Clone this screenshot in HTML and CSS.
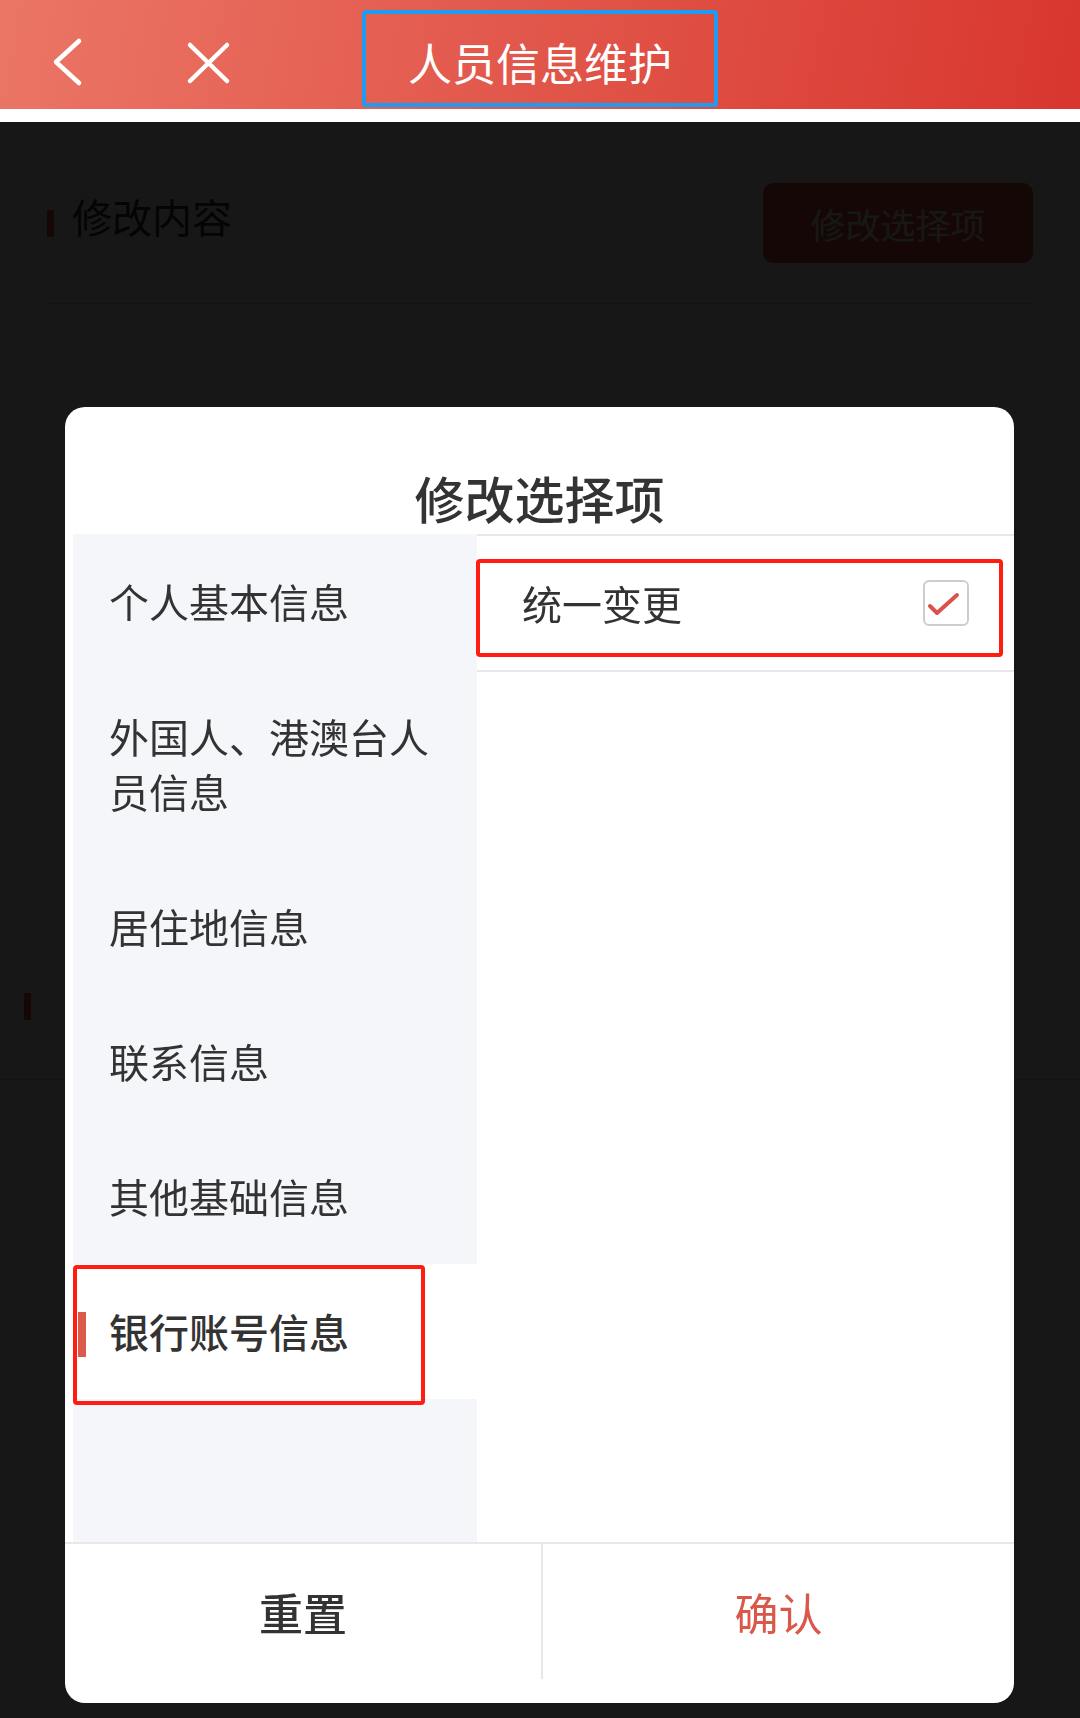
FILE: index.html
```html
<!DOCTYPE html>
<html lang="zh-CN">
<head>
    <meta charset="UTF-8">
    <meta name="viewport" content="width=device-width, initial-scale=1.0">
    <title>人员信息维护</title>
    <link rel="stylesheet" href="styles.css">
</head>
<body>
    <header class="nav">
        <div class="nav-left">
            <svg class="icon-back" width="34" height="50" viewBox="0 0 34 50">
                <path d="M29 4 L6 25 L29 46" fill="none" stroke="#fff" stroke-width="4.5" stroke-linecap="round" stroke-linejoin="round"/>
            </svg>
            <svg class="icon-close" width="50" height="50" viewBox="0 0 50 50">
                <path d="M6 8 L43 44 M43 8 L6 44" fill="none" stroke="#fff" stroke-width="4.5" stroke-linecap="round"/>
            </svg>
        </div>
        <div class="nav-title">
            <h1>人员信息维护</h1>
        </div>
        <div></div>
    </header>

    <main class="page">
        <div class="section-head">
            <span class="mark"></span>
            <h2>修改内容</h2>
            <button class="btn-edit">修改选择项</button>
        </div>
        <div class="section-head second">
            <span class="mark"></span>
            <h2>银行账号信息</h2>
        </div>
    </main>

    <div class="mask"></div>

    <div class="dialog">
        <div class="dialog-title">修改选择项</div>
        <div class="dialog-body">
            <ul class="cat-list">
                <li>个人基本信息</li>
                <li>外国人、港澳台人员信息</li>
                <li>居住地信息</li>
                <li>联系信息</li>
                <li>其他基础信息</li>
                <li class="active"><span class="bar"></span>银行账号信息<span class="mark-box"></span></li>
            </ul>
            <div class="opt-pane">
                <div class="opt-row">
                    <span>统一变更</span>
                    <span class="checkbox">
                        <svg width="42" height="42" viewBox="0 0 42 42">
                            <path d="M5 24 L12 31 L32 13" fill="none" stroke="#d9534a" stroke-width="4" stroke-linecap="round" stroke-linejoin="round"/>
                        </svg>
                    </span>
                    <span class="mark-box"></span>
                </div>
            </div>
        </div>
        <div class="dialog-foot">
            <button class="btn-reset">重置</button>
            <button class="btn-ok">确认</button>
        </div>
    </div>
</body>
</html>
```

FILE: styles.css
```css
body {
    margin: 0;
    font-family: "Noto Sans CJK SC", "Noto Sans", sans-serif;
    background-color: #fff;
    color: #333;
}

/* top bar */
.nav {
    height: 109px;
    box-sizing: border-box;
    padding-top: 14px;
    background: linear-gradient(100deg, #eb7666, #d8362e);
    display: grid;
    grid-template-columns: 1fr 356px 1fr;
    align-items: center;
}
.nav-left {
    display: flex;
    align-items: center;
    gap: 100px;
    padding-left: 50px;
}
.nav-left svg {
    display: block;
}
.nav-title {
    align-self: start;
    margin-top: -4px;
    height: 97px;
    box-sizing: border-box;
    padding-top: 6px;
    border: 4px solid #1e9bf2;
    border-radius: 4px;
    display: flex;
    align-items: center;
    justify-content: center;
}
.nav-title h1 {
    margin: 0;
    font-size: 44px;
    font-weight: 400;
    line-height: 1;
    color: #fff;
}

/* page behind the mask */
.page {
    padding-top: 74px;
}
.section-head {
    display: flex;
    align-items: center;
    margin: 0 47px;
    padding-bottom: 40px;
    border-bottom: 1px solid #ccc;
}
.section-head .mark {
    width: 7px;
    height: 27px;
    background-color: #e0533f;
    margin-right: 18px;
}
.section-head h2 {
    margin: 0 0 14px;
    font-size: 40px;
    font-weight: 400;
    color: #333;
}
.btn-edit {
    margin-left: auto;
    width: 270px;
    height: 80px;
    border: none;
    border-radius: 10px;
    background-color: #e0533f;
    color: #fff;
    font-family: inherit;
    font-size: 35px;
}
.section-head.second {
    margin: 675px 0 0;
    padding: 0 24px 46px;
    height: 54px;
}
.section-head.second .mark {
    margin-right: 50px;
}

.mask {
    position: fixed;
    top: 122px;
    left: 0;
    right: 0;
    bottom: 0;
    background-color: rgba(0, 0, 0, 0.91);
}

/* dialog */
.dialog {
    position: fixed;
    top: 407px;
    left: 65px;
    width: 949px;
    height: 1296px;
    background-color: #fff;
    border-radius: 20px;
    overflow: hidden;
    display: flex;
    flex-direction: column;
}
.dialog-title {
    height: 127px;
    box-sizing: border-box;
    padding-bottom: 12px;
    display: flex;
    align-items: flex-end;
    justify-content: center;
    font-size: 50px;
    line-height: 50px;
    font-weight: 500;
    color: #333;
}
.dialog-body {
    flex: 1;
    min-height: 0;
    display: flex;
}
.cat-list {
    list-style: none;
    margin: 0 0 0 8px;
    padding: 0;
    width: 404px;
    background-color: #f5f6fa;
}
.cat-list li {
    position: relative;
    padding: 40px 30px 40px 36px;
    font-size: 40px;
    line-height: 55px;
    color: #333;
}
.cat-list li.active {
    background-color: #fff;
    font-weight: 500;
}
.cat-list .bar {
    position: absolute;
    left: 5px;
    top: 48px;
    width: 8px;
    height: 45px;
    background-color: #dc5a4b;
}
.mark-box {
    position: absolute;
    box-sizing: border-box;
    border: 4px solid #ff1d12;
    border-radius: 4px;
}
.cat-list .mark-box {
    left: 0;
    top: 1px;
    width: 352px;
    height: 140px;
}
.opt-pane {
    flex: 1;
    border-top: 2px solid #e8e8e8;
}
.opt-row {
    position: relative;
    height: 136px;
    box-sizing: border-box;
    padding: 0 45px;
    border-bottom: 2px solid #e8e8e8;
    display: flex;
    align-items: center;
    justify-content: space-between;
    font-size: 40px;
    color: #333;
}
.opt-row .mark-box {
    left: -1px;
    top: 23px;
    width: 527px;
    height: 98px;
}
.checkbox {
    width: 46px;
    height: 46px;
    box-sizing: border-box;
    border: 2px solid #cdcdcd;
    border-radius: 6px;
    display: flex;
}
.dialog-foot {
    height: 161px;
    box-sizing: border-box;
    padding-bottom: 24px;
    border-top: 2px solid #e8e8e8;
    display: flex;
}
.dialog-foot button {
    flex: 1;
    height: 135px;
    padding: 0;
    border: none;
    background: none;
    font-family: inherit;
    font-size: 44px;
}
.dialog-foot .btn-reset {
    flex: 0 0 476px;
    color: #333;
    font-weight: 500;
}
.dialog-foot .btn-ok {
    color: #d9584a;
    border-left: 2px solid #e8e8e8;
}
```
